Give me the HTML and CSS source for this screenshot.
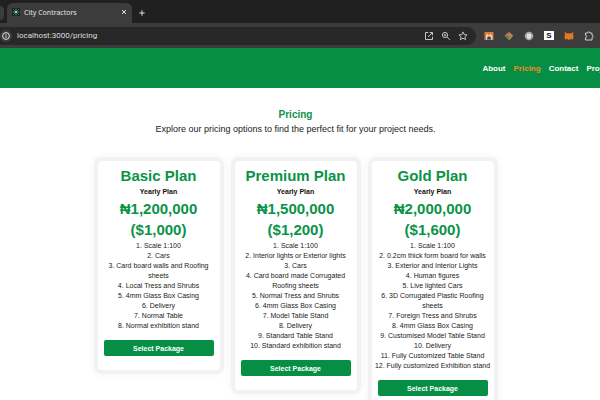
FILE: index.html
```html
<!DOCTYPE html>
<html lang="en">
<head>
<meta charset="utf-8">
<title>City Contractors</title>
<link rel="stylesheet" href="styles.css">
</head>
<body>
<div class="browser">
  <div class="tabs">
    <span class="prev-tab"></span>
    <div class="tab">
      <svg class="favicon" viewBox="0 0 8 8"><rect width="8" height="8" rx="1" fill="#1b2623"/><path d="M4 .8v6.4M.8 4h6.4M1.7 1.7l4.6 4.6M6.3 1.7L1.7 6.3" stroke="#6fc3a0" stroke-width=".8" stroke-dasharray="1.3 .5"/><circle cx="4" cy="4" r="1" fill="#a5ecc8"/></svg>
      <span class="tab-title">City Contractors</span>
      <button class="icon-btn" type="button" aria-label="Close tab"><svg class="close" viewBox="0 0 6 6"><path d="M1 1l4 4M5 1L1 5" stroke="#e0e0e0" stroke-width="1"/></svg></button>
    </div>
    <button class="icon-btn" type="button" aria-label="New tab"><svg class="plus" viewBox="0 0 6 6"><path d="M3 .3v5.4M.3 3h5.4" stroke="#dcdcdc" stroke-width="1"/></svg></button>
  </div>
  <div class="toolbar">
    <div class="address">
      <svg class="info" viewBox="0 0 12 12"><circle cx="6" cy="6" r="6" fill="#3c3c3c"/><circle cx="6" cy="6" r="3.4" fill="none" stroke="#e3e3e3"/><path d="M6 5.5v2.3M6 4v.9" stroke="#e3e3e3"/></svg>
      <input class="url" type="text" aria-label="Address" value="localhost:3000/pricing">
      <button class="icon-btn" type="button" aria-label="Open"><svg class="tool" viewBox="0 0 10 10"><path d="M4.3 1.5H1.5v7h7V5.7M5.8 1.5h2.7v2.7M8.5 1.5L4 6" fill="none" stroke="#c4c4c4"/></svg></button>
      <button class="icon-btn" type="button" aria-label="Zoom"><svg class="tool" viewBox="0 0 10 10"><circle cx="4" cy="4" r="2.6" fill="none" stroke="#c4c4c4"/><path d="M6 6l3 3M2.8 4h2.4M4 2.8v2.4" stroke="#c4c4c4" stroke-width=".9"/></svg></button>
      <button class="icon-btn" type="button" aria-label="Bookmark"><svg class="tool" viewBox="0 0 10 10"><path d="M5 .9l1.200 2.700 2.900.3-2.200 1.900.7 2.900L5 7.200 2.400 8.700l.7-2.900L.9 3.900l2.900-.3z" fill="none" stroke="#cfcfcf" stroke-width=".9"/></svg></button>
    </div>
    <div class="extensions">
      <svg class="tool" viewBox="0 0 10 10"><rect x=".5" y="1" width="9" height="8" fill="#e8762d"/><path d="M2 4.200L3.200 2.500 4.200 4h1.600l1-1.500L8.300 5v3.500H2z" fill="#d9d5d0"/><path d="M3.300 8.500V6.200L5 5.200l1.800 1v2.300z" fill="#384048"/></svg>
      <svg class="tool" viewBox="0 0 10 10"><path d="M5 1L.5 4.500 5 5.500z" fill="#e2673b"/><path d="M5 1l4.500 3.500L5 5.500z" fill="#918c86"/><path d="M.5 4.500L5 9.500v-4z" fill="#2ba55a"/><path d="M9.500 4.500L5 9.500v-4z" fill="#d87b35"/></svg>
      <svg class="tool" viewBox="0 0 10 10"><circle cx="5" cy="5" r="4.300" fill="#a2a2a2"/><path d="M3 3h4v3.500L5 8 3 6.500z" fill="#f2f2f2"/><path d="M5 1v8M1 5h8" stroke="#c8c8c8" stroke-width=".6"/></svg>
      <span class="ext-s">S</span>
      <svg class="tool" viewBox="0 0 10 10"><path d="M.6 1l2.700 1.200h3.400L9.400 1 9 4l.6 2-.7 2.500-2.200-.6-.9.8H4.200l-.9-.8-2.200.6L.4 6 1 4z" fill="#e27a24"/><path d="M.6 1l2.500 1.900M9.400 1L6.900 2.900M1 8.500l2-.8M9 8.500l-2-.8" stroke="#8b5b2b" stroke-width=".7"/></svg>
      <svg class="tool" viewBox="0 0 10 10"><path d="M1.500 2h2a1.100 1.100 0 0 1 2.200 0H8v2.300a1.100 1.100 0 0 1 0 2.200V9H1.500V6.700a1.200 1.200 0 0 0 0-2.400z" fill="none" stroke="#cfcfcf"/></svg>
    </div>
  </div>
</div>
<header class="site-header">
  <nav class="nav">
    <a href="#about">About</a>
    <a class="active" href="#pricing">Pricing</a>
    <a href="#contact">Contact</a>
    <a href="#projects">Projects</a>
  </nav>
</header>
<main class="page">
  <h1 class="title">Pricing</h1>
  <p class="lead">Explore our pricing options to find the perfect fit for your project needs.</p>
  <div class="plans">
    <section class="card">
      <h2>Basic Plan</h2>
      <p class="period">Yearly Plan</p>
      <p class="price">₦1,200,000<br>($1,000)</p>
      <ol>
        <li>Scale 1:100</li><li>Cars</li><li>Card board walls and Roofing sheets</li><li>Local Tress and Shrubs</li><li>4mm Glass Box Casing</li><li>Delivery</li><li>Normal Table</li><li>Normal exhibition stand</li>
      </ol>
      <button class="select" type="button">Select Package</button>
    </section>
    <section class="card">
      <h2>Premium Plan</h2>
      <p class="period">Yearly Plan</p>
      <p class="price">₦1,500,000<br>($1,200)</p>
      <ol>
        <li>Scale 1:100</li><li>Interior lights or Exterior lights</li><li>Cars</li><li>Card board made Corrugated Roofing sheets</li><li>Normal Tress and Shrubs</li><li>4mm Glass Box Casing</li><li>Model Table Stand</li><li>Delivery</li><li>Standard Table Stand</li><li>Standard exhibition stand</li>
      </ol>
      <button class="select" type="button">Select Package</button>
    </section>
    <section class="card">
      <h2>Gold Plan</h2>
      <p class="period">Yearly Plan</p>
      <p class="price">₦2,000,000<br>($1,600)</p>
      <ol>
        <li>Scale 1:100</li><li>0.2cm thick form board for walls</li><li>Exterior and Interior Lights</li><li>Human figures</li><li>Live lighted Cars</li><li>3D Corrugated Plastic Roofing sheets</li><li>Foreign Tress and Shrubs</li><li>4mm Glass Box Casing</li><li>Customised Model Table Stand</li><li>Delivery</li><li>Fully Customized Table Stand</li><li>Fully customized Exhibition stand</li>
      </ol>
      <button class="select" type="button">Select Package</button>
    </section>
  </div>
</main>
</body>
</html>
```
FILE: styles.css
```css
* { box-sizing: border-box; }

body {
  margin: 0;
  overflow: hidden;
  background: #fff;
  color: #222;
  font-family: "Liberation Sans", Arial, sans-serif;
}

h1, h2, p, ol { margin: 0; padding: 0; }
button { font-family: inherit; border: 0; cursor: pointer; }
svg { display: block; flex: none; }

/* Browser bar */
.browser {
  background: #3c3c3c;
  color: #e3e3e3;
  font-family: "Noto Sans", sans-serif;
}

.tabs {
  display: flex;
  align-items: center;
  height: 23px;
  padding-top: 3px;
  background: #1f201f;
}

.prev-tab {
  width: 4px;
  height: 14px;
  margin-right: 3px;
  border-radius: 0 5px 5px 0;
  background: #3c3c3c;
}

.tab {
  display: flex;
  align-items: center;
  gap: 4px;
  width: 125px;
  height: 20px;
  margin-right: 7px;
  padding: 0 5px 2px;
  border-radius: 6px 6px 0 0;
  background: #3c3c3c;
}

.tab-title { flex: 1; font-size: 7px; white-space: nowrap; }
.favicon { width: 8px; height: 8px; }
.close, .plus { width: 6px; height: 6px; }
.icon-btn { padding: 0; background: none; }

.toolbar {
  display: flex;
  align-items: center;
  height: 25px;
  padding-right: 6px;
}

.address {
  display: flex;
  flex: 1;
  align-items: center;
  gap: 7px;
  min-width: 0;
  height: 18px;
  padding-right: 8px;
  border-radius: 0 9px 9px 0;
  background: #282828;
}

.info { width: 12px; height: 12px; }

.url {
  flex: 1;
  min-width: 0;
  margin-left: -2px;
  padding: 0;
  border: 0;
  background: none;
  color: #dedede;
  font-family: Roboto, sans-serif;
  font-size: 8px;
}

.tool { width: 10px; height: 10px; }

.extensions {
  display: flex;
  align-items: center;
  gap: 10px;
  margin-left: 8px;
}

.ext-s {
  width: 10px;
  height: 9px;
  background: #fff;
  color: #111;
  font: bold 8px/9px "Liberation Sans", sans-serif;
  text-align: center;
}

/* Site */
.site-header {
  height: 40px;
  overflow: hidden;
  background: #068e44;
}

.nav {
  display: flex;
  justify-content: flex-end;
  align-items: center;
  gap: 8px;
  height: 100%;
  margin-right: -18px;
}

.nav a {
  color: #fff;
  font-size: 8px;
  font-weight: bold;
  text-decoration: none;
}

.nav .active { color: #f08a1d; }

.page {
  padding: 20px 9px 0 0;
  text-align: center;
}

.title { color: #0b9348; font-size: 10px; line-height: 14px; }
.lead { font-size: 9px; line-height: 15px; }

.plans {
  display: flex;
  justify-content: center;
  align-items: flex-start;
  gap: 15px;
  margin-top: 24px;
}

.card {
  width: 122px;
  padding: 4px 6px 14px;
  border-radius: 4px;
  background: #fff;
  box-shadow: 0 0 0 4px #f2f2f2, 0 0 6px 5px #f6f6f6;
}

.card h2, .price {
  color: #0b9348;
  font-size: 15px;
  font-weight: bold;
  line-height: 21px;
}

.period { color: #111; font-size: 7px; font-weight: bold; line-height: 12px; }

.card ol {
  margin: 1px -4px 0;
  list-style-position: inside;
  font-size: 7px;
  line-height: 10px;
}

.select {
  width: 100%;
  height: 16px;
  margin-top: 9px;
  padding: 0;
  border-radius: 2px;
  background: #068e44;
  color: #fff;
  font-size: 7px;
  font-weight: bold;
}
```
